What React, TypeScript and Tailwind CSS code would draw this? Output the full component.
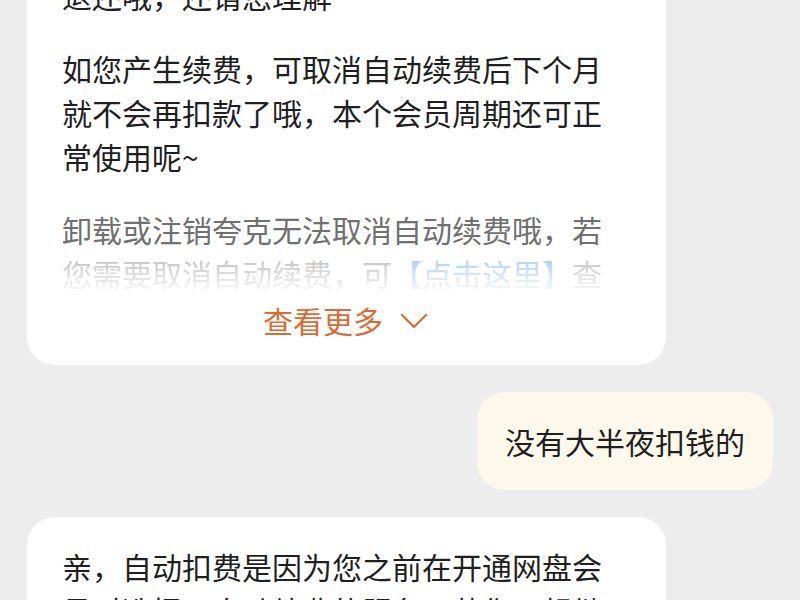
import React from 'react';

const font = { fontFamily: '"Noto Sans CJK SC", "Noto Sans", sans-serif' };

export default function App() {
  return (
    <div className="h-[600px] w-[800px] overflow-hidden bg-[#ededed]" style={font}>
      <div className="-mt-[54px] flex flex-col gap-[27px]">
        {/* agent reply with collapsed content */}
        <div className="ml-[27px] w-[639px] rounded-[28px] bg-white pl-[35px] pr-[63px] pt-[27px] pb-[23px] text-[30px] leading-[44px] text-[#1f1f1f]">
          <p>退还哦，还请您理解~</p>
          <p className="mt-[29px]">如您产生续费，可取消自动续费后下个月就不会再扣款了哦，本个会员周期还可正常使用呢~</p>
          <div className="relative mt-[29px] h-[88px] overflow-hidden text-[#707070]">
            <p>
              卸载或注销夸克无法取消自动续费哦，若您需要取消自动续费，可<span className="text-[#3d8ee6]">【点击这里】</span>查看
            </p>
            <div className="absolute inset-x-0 top-[40px] bottom-0 bg-linear-to-b from-white/45 to-white" />
          </div>
          <div className="mt-[3px] flex items-center justify-center gap-[17px] pl-[26px] text-[#dc6a33]">
            <span>查看更多</span>
            <svg width="28" height="18" viewBox="0 0 28 18" fill="none">
              <polyline points="2,4 14,16 26,4" stroke="#dc6a33" strokeWidth="2.2" strokeLinecap="round" strokeLinejoin="round" />
            </svg>
          </div>
        </div>

        {/* user message */}
        <div className="flex justify-end pr-[27px]">
          <div className="rounded-[28px] bg-[#fdf8ec] px-[28px] py-[27px] text-[30px] leading-[44px] text-[#1f1f1f]">
            没有大半夜扣钱的
          </div>
        </div>

        {/* next agent reply */}
        <div className="ml-[27px] w-[639px] rounded-[28px] bg-white pl-[35px] pr-[63px] pt-[27px] pb-[23px] text-[30px] leading-[44px] text-[#1f1f1f]">
          <p>亲，自动扣费是因为您之前在开通网盘会员时选择了自动续费的服务，若您不想继续续费可以取消哦~</p>
        </div>
      </div>
    </div>
  );
}
